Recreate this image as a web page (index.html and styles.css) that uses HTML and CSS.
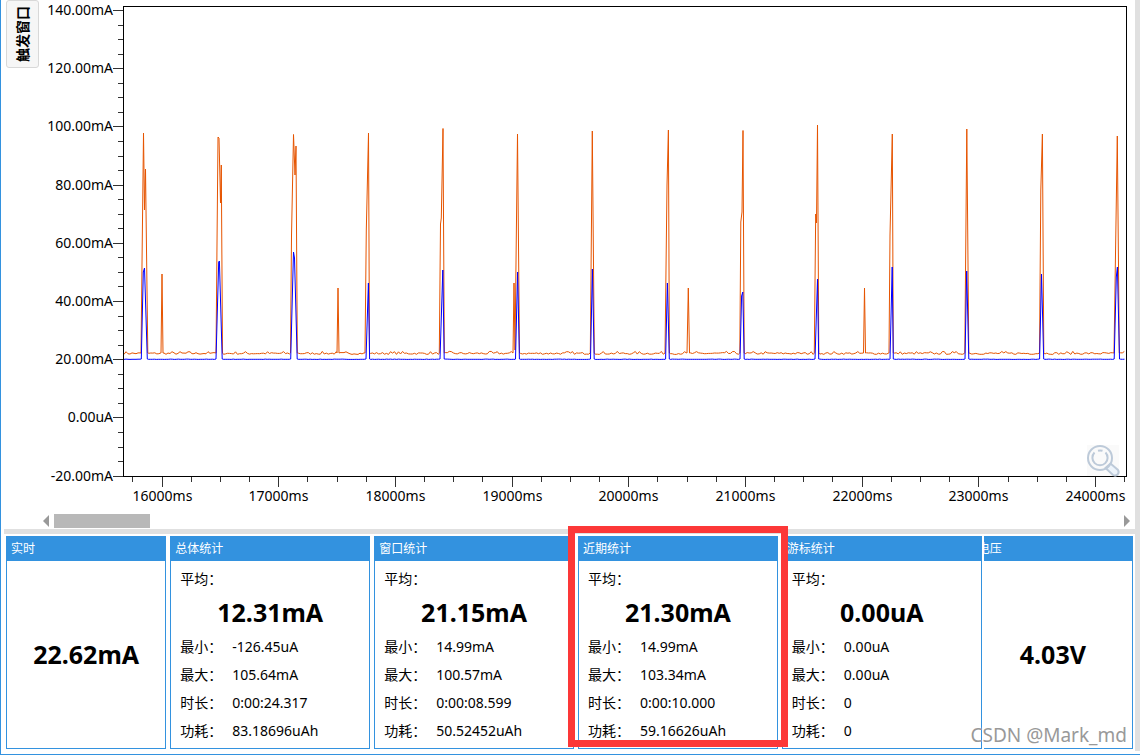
FILE: index.html
```html
<!DOCTYPE html>
<html lang="zh-CN">
<head>
<meta charset="utf-8">
<title>电流监测</title>
<link rel="stylesheet" href="styles.css">
</head>
<body>
<div class="app">
  <main class="window">
    <section class="monitor">
      <div class="side"><button type="button" class="trigger"><span class="trigger-label">触发窗口</span></button></div>
      <div class="chart-area">
        <svg class="chart" id="chart" viewBox="40 5 1095 505" role="img" aria-label="电流曲线">
          <g id="ticks" class="ticks"></g>
          <g id="labels" class="labels"></g>
          <polyline id="peak" class="trace trace-peak"></polyline>
          <polyline id="mean" class="trace trace-mean"></polyline>
          <rect class="plot-frame" x="123.5" y="6.5" width="1003" height="470"></rect>
          <g class="magnifier">
            <rect class="magnifier-bg" x="1087" y="445" width="32" height="31"></rect>
            <path class="magnifier-handle" d="M1105.5 468l5-4.500 7.500 6.500q1.500 2.500-.5 4.500t-4.500.5z"></path>
            <circle cx="1100" cy="458" r="12"></circle>
            <path d="M1094.500 452.500a7.600 7.600 0 1 0 11 0M1098 450.800a8 8 0 0 1 4.500 0"></path>
          </g>
        </svg>
        <div class="scroll">
          <button type="button" class="arrow arrow-left" aria-label="向左"></button>
          <div class="track"><div class="thumb"></div></div>
          <button type="button" class="arrow arrow-right" aria-label="向右"></button>
        </div>
      </div>
    </section>
    <div class="splitter"></div>
    <section class="panels">
      <article class="panel narrow">
        <h2 class="title">实时</h2>
        <div class="body single"><strong class="value">22.62mA</strong></div>
      </article>
      <article class="panel">
        <h2 class="title">总体统计</h2>
        <div class="body">
          <div class="caption">平均：</div>
          <strong class="value">12.31mA</strong>
          <dl class="stats"><dt>最小：</dt><dd>-126.45uA</dd><dt>最大：</dt><dd>105.64mA</dd><dt>时长：</dt><dd>0:00:24.317</dd><dt>功耗：</dt><dd>83.18696uAh</dd></dl>
        </div>
      </article>
      <article class="panel">
        <h2 class="title">窗口统计</h2>
        <div class="body">
          <div class="caption">平均：</div>
          <strong class="value">21.15mA</strong>
          <dl class="stats"><dt>最小：</dt><dd>14.99mA</dd><dt>最大：</dt><dd>100.57mA</dd><dt>时长：</dt><dd>0:00:08.599</dd><dt>功耗：</dt><dd>50.52452uAh</dd></dl>
        </div>
      </article>
      <article class="panel marked">
        <h2 class="title">近期统计</h2>
        <div class="body">
          <div class="caption">平均：</div>
          <strong class="value">21.30mA</strong>
          <dl class="stats"><dt>最小：</dt><dd>14.99mA</dd><dt>最大：</dt><dd>103.34mA</dd><dt>时长：</dt><dd>0:00:10.000</dd><dt>功耗：</dt><dd>59.16626uAh</dd></dl>
        </div>
      </article>
      <article class="panel over">
        <h2 class="title">游标统计</h2>
        <div class="body">
          <div class="caption">平均：</div>
          <strong class="value">0.00uA</strong>
          <dl class="stats"><dt>最小：</dt><dd>0.00uA</dd><dt>最大：</dt><dd>0.00uA</dd><dt>时长：</dt><dd>0</dd><dt>功耗：</dt><dd>0</dd></dl>
        </div>
      </article>
      <article class="panel narrow under">
        <h2 class="title">电压</h2>
        <div class="body single"><strong class="value">4.03V</strong></div>
      </article>
    </section>
  </main>
  <div class="watermark">CSDN @Mark_md</div>
</div>
<script src="chart.js"></script>
</body>
</html>
```

FILE: styles.css
```css
* {
  box-sizing: border-box;
}

body {
  margin: 0;
  background: #fff;
  color: #000;
  font: 14px/28px "Noto Sans", "Noto Sans CJK SC", sans-serif;
}

button {
  padding: 0;
  font: inherit;
  color: inherit;
}

.app {
  position: relative;
  display: flex;
  flex-direction: column;
  min-height: 100vh;
  padding-bottom: 3px;
  border-left: 1px solid #3392df;
  border-bottom: 1px solid #3392df;
  overflow: hidden;
}

.window {
  flex: 1;
  display: flex;
  flex-direction: column;
  padding-left: 3px;
  border-right: 5px solid #e0e0e0;
}

.monitor {
  display: flex;
}

.side {
  flex: 0 0 36px;
  padding-left: 2px;
}

.trigger {
  display: flex;
  align-items: center;
  justify-content: center;
  width: 33px;
  height: 68px;
  border: 1px solid #d8d8d8;
  border-radius: 3px;
  background: #f6f6f6;
}

.trigger-label {
  writing-mode: vertical-rl;
  text-orientation: sideways;
  transform: rotate(180deg);
  font-weight: bold;
  line-height: 20px;
}

.chart-area {
  flex: 1;
  min-width: 0;
  padding-top: 5px;
}

.chart {
  display: block;
  width: 100%;
  overflow: visible;
}

.ticks path {
  stroke: #333;
}

.labels text {
  font-size: 14px;
}

.labels .amp {
  text-anchor: end;
}

.labels .time {
  text-anchor: middle;
}

.trace {
  fill: none;
  stroke-width: 1;
}

.trace-peak {
  stroke: #e65400;
}

.trace-mean {
  stroke: #0000ff;
}

.plot-frame {
  fill: none;
  stroke: #000;
}

.magnifier {
  fill: none;
  stroke: #bdcad9;
  stroke-width: 2;
}

.magnifier .magnifier-bg {
  fill: #fafafa;
  stroke: none;
}

.magnifier .magnifier-handle {
  fill: #edf4fb;
}

.scroll {
  display: flex;
  align-items: center;
  gap: 5px;
  margin: 4px 5px 1px 3px;
}

.track {
  flex: 1;
}

.thumb {
  width: 9%;
  height: 14px;
  background: #b8b8b8;
}

.arrow {
  width: 6px;
  height: 12px;
  border: 0;
  background: #999;
}

.arrow-left {
  clip-path: polygon(100% 0, 100% 100%, 0 50%);
}

.arrow-right {
  clip-path: polygon(0 0, 0 100%, 100% 50%);
}

.splitter {
  height: 5px;
  background: #e0e0e0;
}

.panels {
  flex: 1;
  display: flex;
  gap: 4px;
  padding: 2px;
}

.panel {
  position: relative;
  display: flex;
  flex-direction: column;
  flex: 200 1 0;
  min-width: 0;
  border: 1px solid #3392df;
  border-top: 0;
  background: #fff;
}

.narrow {
  flex-grow: 160;
}

.title {
  margin: 0;
  padding-left: 4px;
  background: #3392df;
  color: #fff;
  font-size: 12px;
  font-weight: normal;
  line-height: 25px;
}

.body {
  flex: 1;
  padding: 4px 0 3px 9px;
}

.value {
  display: block;
  margin: 0 0 2px -9px;
  font-size: 25px;
  line-height: 38px;
  text-align: center;
}

.single {
  display: flex;
  align-items: center;
  justify-content: center;
  padding: 0;
}

.single .value {
  margin-left: 0;
}

.stats {
  display: grid;
  grid-template-columns: 52px 1fr;
  margin: 0;
}

.stats dd {
  margin: 0;
}

.marked {
  z-index: 3;
}

.marked::after {
  content: "";
  position: absolute;
  inset: -10px -11px 1px -11px;
  border: 7px solid #fc3838;
}

.over {
  z-index: 2;
  box-shadow: 2px 0 0 #fff;
}

.under {
  margin-left: -13px;
}

.watermark {
  position: absolute;
  right: 13px;
  bottom: 5px;
  z-index: 4;
  color: #999;
  font-size: 19px;
  text-shadow: -1px -1px 0 #fff;
}
```

FILE: chart.js
```js
const SVG = "http://www.w3.org/2000/svg";
const ticks = document.getElementById("ticks");
const labels = document.getElementById("labels");

function tick(d) {
  const path = document.createElementNS(SVG, "path");
  path.setAttribute("d", d);
  ticks.append(path);
}

function label(text, x, y, kind) {
  const node = document.createElementNS(SVG, "text");
  node.setAttribute("x", x);
  node.setAttribute("y", y);
  node.setAttribute("class", kind);
  node.textContent = text;
  labels.append(node);
}

// Amplitude axis: 140 mA down to -20 mA, four minor steps per major one.
for (let i = 0; i <= 32; i++) {
  const y = Math.round(10 + i * 14.55) + 0.5;
  const major = i % 4 === 0;
  tick(`M${major ? 113 : 118} ${y}H123`);
  if (major) {
    const amp = 140 - i * 5;
    label(amp === 0 ? "0.00uA" : amp.toFixed(2) + "mA", 113, Math.round(y + 4), "amp");
  }
}

// Time axis: 250 ms minor steps from 15750 ms.
for (let i = 0; i <= 34; i++) {
  const x = Math.round(132.4 + i * 29.17) + 0.5;
  const major = i % 4 === 1;
  tick(`M${x} 477V${major ? 487 : 482}`);
  if (major) label(15750 + i * 250 + "ms", x, 501, "time");
}

const peakSpikes = [
  [141, 353, 143.5, 133, 144.5, 210, 145.5, 169, 147.8, 353],
  [161, 353, 162, 274, 163, 353],
  [216, 353, 218, 137, 219, 138, 220.5, 203, 221.3, 165, 222.5, 353],
  [290.5, 353, 291.5, 236, 293.5, 134.5, 295, 175, 296, 146, 297.3, 353],
  [337, 353, 338, 288, 339, 353],
  [365, 353, 366.3, 230, 368.5, 133, 369.5, 353],
  [439.3, 353, 440.5, 224, 441.3, 218, 443, 128.5, 444.3, 353],
  [513, 353, 514, 283, 515, 350, 517.5, 134, 519.5, 353],
  [590.3, 353, 592.3, 131, 594.3, 353],
  [665, 353, 667, 185, 668.4, 130, 669.4, 353],
  [687, 353, 688.3, 288, 689.5, 353],
  [739.8, 353, 740.8, 222, 742, 212, 743, 130.5, 744.2, 353],
  [814.3, 353, 815.7, 214, 816.5, 223, 817.5, 125, 818.8, 353],
  [863.5, 353, 864.5, 288, 865.5, 353],
  [889, 353, 890, 235, 892.3, 134, 893.3, 353],
  [964.8, 353, 966.8, 129, 968.8, 353],
  [1039.5, 353, 1040.8, 190, 1042.4, 134, 1043.8, 353],
  [1114, 353, 1117.3, 136, 1119.3, 353]
];

const meanSpikes = [
  [141.3, 359, 143.3, 272, 144.5, 268, 147.3, 359],
  [216, 359, 218.7, 262, 219.4, 261, 222.2, 359],
  [290.7, 359, 293.5, 252, 294.5, 258, 297.2, 359],
  [366, 359, 368.4, 283, 369.6, 359],
  [440, 359, 442.8, 270, 444.2, 359],
  [515.5, 359, 517.6, 272, 519.4, 359],
  [590.5, 359, 592.4, 269, 594.2, 359],
  [665.6, 359, 667.4, 283, 669.3, 359],
  [740, 359, 741.6, 296, 742.8, 292, 744.2, 359],
  [815, 359, 817.5, 279, 818.7, 359],
  [890, 359, 892.2, 267, 893.3, 359],
  [965, 359, 966.7, 271, 968.8, 359],
  [1039.6, 359, 1041.5, 274, 1043.7, 359],
  [1114.2, 359, 1116.3, 277, 1117.4, 267, 1119.5, 359]
];

// Joins the spikes with a baseline that wanders by up to `noise` pixels.
function trace(id, spikes, base, noise) {
  const points = [];
  let x = 124;
  let seed = 7;
  const fill = end => {
    for (; x < end; x += 2) {
      seed = (seed * 16807) % 2147483647;
      const r = seed / 2147483647 - 0.5;
      points.push(`${x},${(base - r * 2 * noise * (r > 0.4 ? 2 : 1)).toFixed(1)}`);
    }
  };
  for (const spike of spikes) {
    fill(spike[0]);
    for (let i = 0; i < spike.length; i += 2) points.push(`${spike[i]},${spike[i + 1]}`);
    x = spike[spike.length - 2] + 1;
  }
  fill(1125);
  document.getElementById(id).setAttribute("points", points.join(" "));
}

trace("peak", peakSpikes, 353.4, 1);
trace("mean", meanSpikes, 359.3, 0.1);
```
